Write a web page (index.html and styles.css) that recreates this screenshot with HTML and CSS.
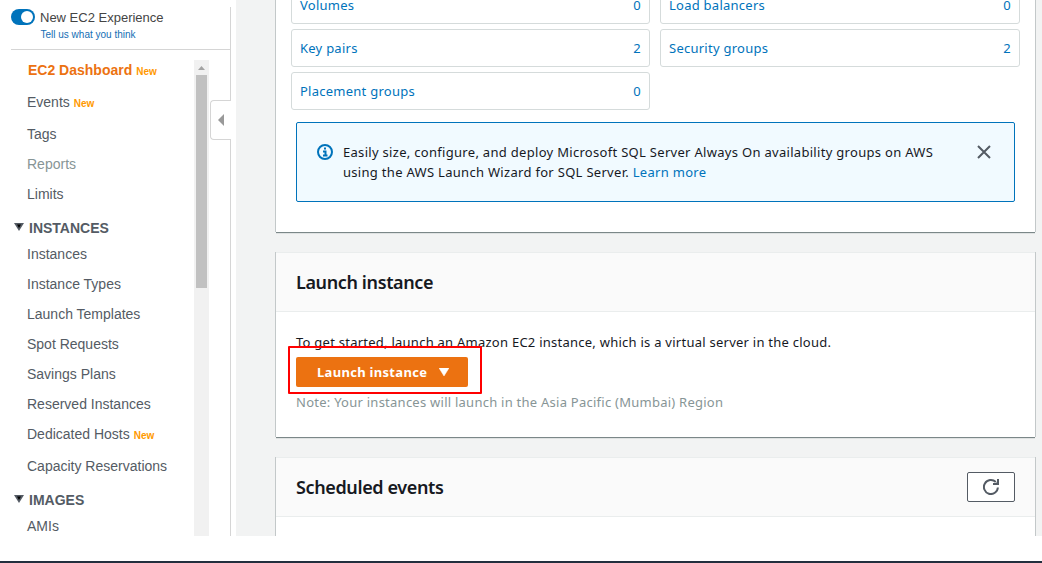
FILE: index.html
```
<!DOCTYPE html>
<html lang="en">
<head>
<meta charset="utf-8">
<title>EC2 Dashboard</title>
<link rel="stylesheet" href="styles.css">
</head>
<body>
<div class="app">
  <aside class="sidebar">
    <div class="panel">
      <header class="experience">
        <span class="toggle"><span class="knob"></span></span>
        <div class="experience-text">
          <div class="experience-title">New EC2 Experience</div>
          <a class="feedback">Tell us what you think</a>
        </div>
      </header>
      <div class="nav-wrap">
        <nav class="nav">
          <a class="item tagged current">EC2 Dashboard<span class="new">New</span></a>
          <a class="item tagged">Events<span class="new">New</span></a>
          <a class="item">Tags</a>
          <a class="item muted">Reports</a>
          <a class="item">Limits</a>
          <div class="group"><svg class="caret" viewBox="0 0 10 8"><path d="M0 0H10L5 8Z" fill="#545b64"/><path d="M3 1.5H7L5 5Z" fill="#000"/></svg>INSTANCES</div>
          <a class="item">Instances</a>
          <a class="item">Instance Types</a>
          <a class="item">Launch Templates</a>
          <a class="item">Spot Requests</a>
          <a class="item">Savings Plans</a>
          <a class="item">Reserved Instances</a>
          <a class="item tagged">Dedicated Hosts<span class="new">New</span></a>
          <a class="item">Capacity Reservations</a>
          <div class="group"><svg class="caret" viewBox="0 0 10 8"><path d="M0 0H10L5 8Z" fill="#545b64"/><path d="M3 1.5H7L5 5Z" fill="#000"/></svg>IMAGES</div>
          <a class="item">AMIs</a>
        </nav>
        <div class="scrollbar">
          <svg class="scroll-up" viewBox="0 0 15 15"><path d="M4 10H11L7.5 6Z" fill="#a3a3a3"/></svg>
          <div class="thumb"></div>
        </div>
      </div>
    </div>
    <button class="collapse"><svg viewBox="0 0 6 12"><path d="M6 0V12L0 6Z" fill="#999"/></svg></button>
  </aside>
  <main class="content">
    <section class="card resources">
      <div class="grid">
        <a class="tile"><span>Volumes</span><span>0</span></a>
        <a class="tile"><span>Load balancers</span><span>0</span></a>
        <a class="tile"><span>Key pairs</span><span>2</span></a>
        <a class="tile"><span>Security groups</span><span>2</span></a>
        <a class="tile"><span>Placement groups</span><span>0</span></a>
      </div>
      <div class="alert">
        <svg class="info" viewBox="0 0 16 16" fill="none" stroke="#0073bb" stroke-width="2"><circle cx="8" cy="8" r="7"/><path d="M6 7.5H8.5V11M6 11.5H10.5M7 4.5H9"/></svg>
        <p class="alert-text"><span class="line">Easily size, configure, and deploy Microsoft SQL Server Always On availability groups on AWS</span><span class="line">using the AWS Launch Wizard for SQL Server. <a>Learn more</a></span></p>
        <svg class="close" viewBox="0 0 14 14" fill="none" stroke="#545b64" stroke-width="2"><path d="M1 1L13 13M13 1L1 13"/></svg>
      </div>
    </section>
    <section class="card launch">
      <header class="card-head"><h2>Launch instance</h2></header>
      <div class="card-body">
        <p class="intro">To get started, launch an Amazon EC2 instance, which is a virtual server in the cloud.</p>
        <div class="action">
          <button class="primary"><span>Launch instance</span><svg viewBox="0 0 10 8"><path d="M0 0H10L5 8Z" fill="#fff" stroke="#fff" stroke-width=".5"/></svg></button>
          <span class="highlight"></span>
        </div>
        <p class="note">Note: Your instances will launch in the Asia Pacific (Mumbai) Region</p>
      </div>
    </section>
    <section class="card events">
      <header class="card-head"><h2>Scheduled events</h2>
        <button class="refresh"><svg viewBox="0 0 16 16"><path d="M14.9 8.5A7 7 0 1 1 12.8 3" fill="none" stroke="#545b64" stroke-width="2"/><path d="M10 5H15V0" fill="none" stroke="#545b64" stroke-width="2"/><path d="M12 5L15 2V5Z" fill="#545b64"/></svg></button>
      </header>
    </section>
  </main>
</div>
<footer class="footer"></footer>
</body>
</html>
```
FILE: styles.css
```
* { box-sizing: border-box; }
body {
  margin: 0;
  height: 563px;
  overflow: hidden;
  display: flex;
  flex-direction: column;
  justify-content: space-between;
  background: #fff;
  font-family: "Noto Sans", "Open Sans", sans-serif;
  font-size: 13px;
  line-height: 20px;
  color: #16191f;
}
p, h2 { margin: 0; }
button { padding: 0; font: inherit; }
svg { display: block; flex: none; }
.app { display: flex; height: 536px; overflow: hidden; }
.footer { height: 2px; background: #232f3e; }

.sidebar {
  position: relative;
  width: 236px;
  flex: none;
  padding-top: 7px;
  font-family: "Liberation Sans", Arial, sans-serif;
  color: #545b64;
}
.panel { width: 231px; height: 529px; border-right: 1px solid #d5d5d5; }
.experience {
  display: flex;
  gap: 5px;
  height: 43px;
  margin-left: 11px;
  padding-top: 2px;
  border-bottom: 1px solid #d5d5d5;
}
.toggle { width: 24px; height: 16px; border-radius: 8px; background: #0073bb; padding: 2px; display: flex; justify-content: flex-end; }
.knob { width: 12px; height: 12px; border-radius: 50%; background: #fff; }
.experience-title { font-size: 13px; line-height: 17px; color: #444; white-space: nowrap; }
.feedback { display: block; padding-left: 0.5px; font-size: 10px; line-height: 18px; color: #146eb4; white-space: nowrap; }
.nav-wrap { display: flex; justify-content: space-between; height: 481px; margin-top: 5px; padding-right: 21px; }
.nav { padding-left: 27px; }
.item { display: block; height: 30px; line-height: 30px; font-size: 14px; white-space: nowrap; }
.tagged { height: 32px; }
.current { font-weight: bold; color: #ec7211; padding-left: 1px; }
.muted { color: #879596; }
.new { margin-left: 4px; font-size: 10px; font-weight: bold; color: #ff9900; }
.group { display: flex; align-items: center; gap: 5px; height: 30px; padding-top: 8px; margin-left: -13px; font-size: 14px; font-weight: bold; }
.caret { width: 10px; height: 8px; margin-top: -3px; }
.scrollbar { width: 15px; margin-top: 5px; background: #f1f1f1; }
.scroll-up { width: 15px; height: 15px; }
.thumb { width: 11px; height: 213px; margin: 0 auto; background: #c1c1c1; }
.collapse {
  position: absolute;
  left: 210px;
  top: 100px;
  width: 21px;
  height: 40px;
  display: flex;
  align-items: center;
  padding-left: 7px;
  background: #fff;
  border: 1px solid #d5d5d5;
  border-right: 0;
  border-radius: 4px 0 0 4px;
}
.collapse svg { width: 6px; height: 12px; }

.content { flex: 1; background: #f2f3f3; padding: 0 7px 0 40px; }
.card {
  background: #fff;
  border-top: 1px solid #eaeded;
  box-shadow: 0 1px 0 #7b8788, -1px 0 0 #c3c8c9, 1px 0 0 #c3c8c9, 0 2px 0 #dfe2e2;
}
.card + .card { margin-top: 20px; }
.resources { height: 232px; border-top: 0; overflow: hidden; }
.grid { display: grid; grid-template-columns: 359px 360px; column-gap: 10px; row-gap: 5px; margin: -14px 0 0 15px; }
.tile {
  display: flex;
  justify-content: space-between;
  align-items: center;
  height: 38px;
  padding: 0 8px;
  border: 1px solid #d5dbdb;
  border-radius: 3px;
  color: #0073bb;
  letter-spacing: 0.25px;
}
.alert {
  display: flex;
  width: 719px;
  height: 80px;
  margin: 12px 0 0 20px;
  padding: 19px 23px 0 20px;
  background: #f1faff;
  border: 1px solid #0073bb;
  border-radius: 2px;
}
.info { width: 16px; height: 16px; margin: 2px 10px 0 0; }
.alert-text { flex: 1; white-space: nowrap; letter-spacing: 0.3px; }
.line { display: block; }
.alert a { color: #0073bb; }
.close { width: 14px; height: 14px; margin-top: 3px; }
.launch { height: 185px; }
.card-head {
  display: flex;
  align-items: center;
  justify-content: space-between;
  height: 59px;
  padding: 0 20px;
  background: #fafafa;
  border-bottom: 1px solid #eaeded;
}
h2 { font-size: 18px; line-height: 22px; font-weight: 600; letter-spacing: -0.38px; }
.card-body { padding: 20px; white-space: nowrap; letter-spacing: 0.25px; }
.action { position: relative; width: 172px; margin: 5px 0; }
.primary {
  display: flex;
  align-items: center;
  gap: 12px;
  width: 172px;
  height: 30px;
  padding-left: 21px;
  background: #ec7211;
  border: 0;
  border-radius: 2px;
  color: #fff;
  font-weight: 700;
  letter-spacing: 0.3px;
}
.primary svg { width: 10px; height: 8px; }
.highlight { position: absolute; left: -8px; top: -11px; width: 194px; height: 48px; border: 2px solid #f00; border-radius: 1px; }
.note { color: #879596; }
.events { height: 90px; }
.refresh {
  display: flex;
  align-items: center;
  justify-content: center;
  width: 48px;
  height: 30px;
  background: #fff;
  border: 1px solid #545b64;
  border-radius: 2px;
}
.refresh svg { width: 16px; height: 16px; }
```
